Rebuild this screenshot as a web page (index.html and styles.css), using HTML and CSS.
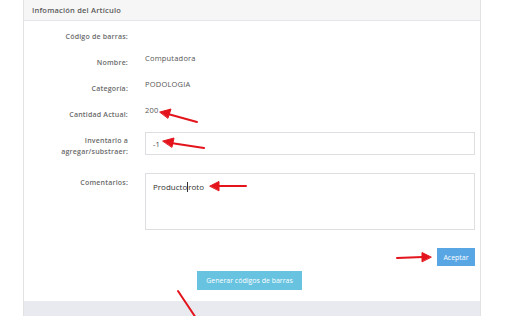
FILE: index.html
```html
<!DOCTYPE html>
<html lang="es">
<head>
    <meta charset="UTF-8">
    <title>Artículo</title>
    <link rel="stylesheet" href="styles.css">
</head>
<body>
    <div class="panel">
        <div class="panel-heading">Infomación del Artículo</div>
        <div class="panel-body">
            <div class="row">
                <label class="label">Código de barras:</label>
                <div class="value"></div>
            </div>
            <div class="row">
                <label class="label">Nombre:</label>
                <div class="value">Computadora</div>
            </div>
            <div class="row">
                <label class="label">Categoría:</label>
                <div class="value">PODOLOGIA</div>
            </div>
            <div class="row">
                <label class="label">Cantidad Actual:</label>
                <div class="value">200</div>
            </div>
            <div class="row row-input">
                <label class="label">Inventario a<br>agregar/substraer:</label>
                <div class="input">-1</div>
            </div>
            <div class="row row-area">
                <label class="label">Comentarios:</label>
                <div class="textarea">Producto<span class="caret"></span>roto</div>
            </div>
            <div class="actions">
                <button class="btn btn-primary">Aceptar</button>
            </div>
            <div class="center">
                <button class="btn btn-info">Generar códigos de barras</button>
            </div>
        </div>
        <div class="panel-footer"></div>
    </div>

    <svg class="arrows" width="505" height="316" viewBox="0 0 505 316">
        <g stroke="#e3141b" stroke-width="2" stroke-linecap="round" fill="#e3141b">
            <line x1="197" y1="122" x2="168" y2="114" />
            <polygon points="160,112 171,109 168,118" stroke-width="1" />
            <line x1="204" y1="148" x2="171" y2="143" />
            <polygon points="163,141 174,138 172,147" stroke-width="1" />
            <line x1="246" y1="186" x2="218" y2="186" />
            <polygon points="210,186 219,181.5 219,190.5" stroke-width="1" />
            <line x1="397" y1="258" x2="423" y2="257" />
            <polygon points="431,257 422,252.5 422,261.5" stroke-width="1" />
            <line x1="178" y1="291" x2="196" y2="318" />
        </g>
    </svg>
</body>
</html>
```

FILE: styles.css
```css
body {
    margin: 0;
    background: white;
    font-family: "Open Sans", Lato, sans-serif;
    font-size: 7.5px;
    color: #555;
    position: relative;
    width: 505px;
    height: 316px;
    overflow: hidden;
}
.panel {
    margin-left: 23px;
    width: 456px;
    border-left: 1px solid #e3e3e6;
    border-right: 1px solid #e3e3e6;
    background: white;
}
.panel-heading {
    height: 20px;
    line-height: 21px;
    padding-left: 8px;
    background: #f6f6f7;
    border-bottom: 1px solid #e6e6ea;
    font-weight: 600;
    color: #5a5a5a;
    letter-spacing: 0.2px;
}
.panel-body {
    padding-top: 5px;
    padding-right: 5px;
}
.row {
    display: flex;
    align-items: flex-start;
    height: 26px;
    line-height: 11px;
}
.label {
    width: 104px;
    flex: none;
    text-align: right;
    padding-top: 5px;
    color: #6a6a6a;
    font-weight: 600;
    font-size: 7px;
    letter-spacing: 0.2px;
}
.value {
    margin-left: 17px;
    padding-top: 1px;
    color: #555;
    font-size: 7.5px;
    letter-spacing: 0.2px;
}
.row-input {
    height: 41px;
}
.input,
.textarea {
    margin-left: 17px;
    margin-top: 2px;
    flex: 1;
    border: 1px solid #dedee2;
    box-sizing: border-box;
    padding-left: 7px;
    color: #444;
}
.input {
    height: 23px;
    line-height: 22px;
}
.row-area {
    height: auto;
}
.row-area .label {
    padding-top: 6px;
}
.textarea {
    height: 57px;
    padding-top: 7px;
    font-size: 8px;
    color: #333;
}
.caret {
    display: inline-block;
    width: 1px;
    height: 10px;
    background: #333;
    vertical-align: -2px;
}
.actions {
    display: flex;
    justify-content: flex-end;
    margin-top: 18px;
}
.btn {
    border: none;
    color: white;
    font-family: "Open Sans", Lato, sans-serif;
    font-size: 7px;
    padding: 0;
}
.btn-primary {
    width: 38px;
    height: 18px;
    background: #58a6e4;
}
.center {
    display: flex;
    justify-content: center;
    margin-top: 5px;
    padding-bottom: 11px;
}
.btn-info {
    width: 105px;
    height: 19px;
    background: #67c3df;
}
.panel-footer {
    height: 15px;
    background: #e9eaf0;
}
.arrows {
    position: absolute;
    left: 0;
    top: 0;
}
```
